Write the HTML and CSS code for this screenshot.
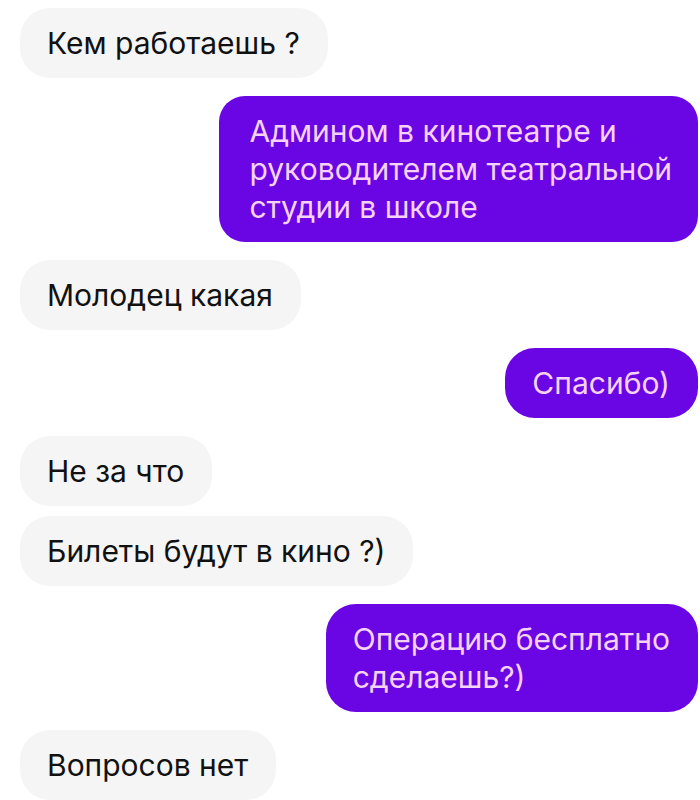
FILE: index.html
```html
<!DOCTYPE html>
<html lang="ru">
<head>
  <meta charset="UTF-8" />
  <meta name="viewport" content="width=device-width, initial-scale=1" />
  <title>Чат</title>
  <link rel="stylesheet" href="styles.css">
</head>
<body>
  <div class="chat">
    <div class="msg in">Кем работаешь ?</div>
    <div class="msg out wide">Админом в кинотеатре и<br>руководителем театральной<br>студии в школе</div>
    <div class="msg in">Молодец какая</div>
    <div class="msg out">Спасибо)</div>
    <div class="msg in">Не за что</div>
    <div class="msg in follow">Билеты будут в кино ?)</div>
    <div class="msg out">Операцию бесплатно<br>сделаешь?)</div>
    <div class="msg in">Вопросов нет</div>
  </div>
</body>
</html>
```

FILE: styles.css
```css
body {
  margin: 0;
  background: #ffffff;
  font-family: Inter, "Noto Sans", "DejaVu Sans", sans-serif;
}

.chat {
  display: flex;
  flex-direction: column;
  padding: 8px 2px 0 20px;
}

.msg {
  box-sizing: border-box;
  font-size: 30px;
  line-height: 38px;
  padding: 16px 28px 16px 27px;
  border-radius: 30px;
  margin-top: 18px;
  white-space: nowrap;
}

.msg:first-child {
  margin-top: 0;
}

/* incoming bubbles, grey on the left */
.in {
  align-self: flex-start;
  background: #f5f5f5;
  color: #111111;
}

/* my bubbles, purple on the right */
.out {
  align-self: flex-end;
  background: #6a06e4;
  color: #f6d3f6;
}

.wide {
  padding-left: 30px;
  padding-right: 26px;
  border-radius: 26px;
}

.follow {
  margin-top: 10px;
}
```
